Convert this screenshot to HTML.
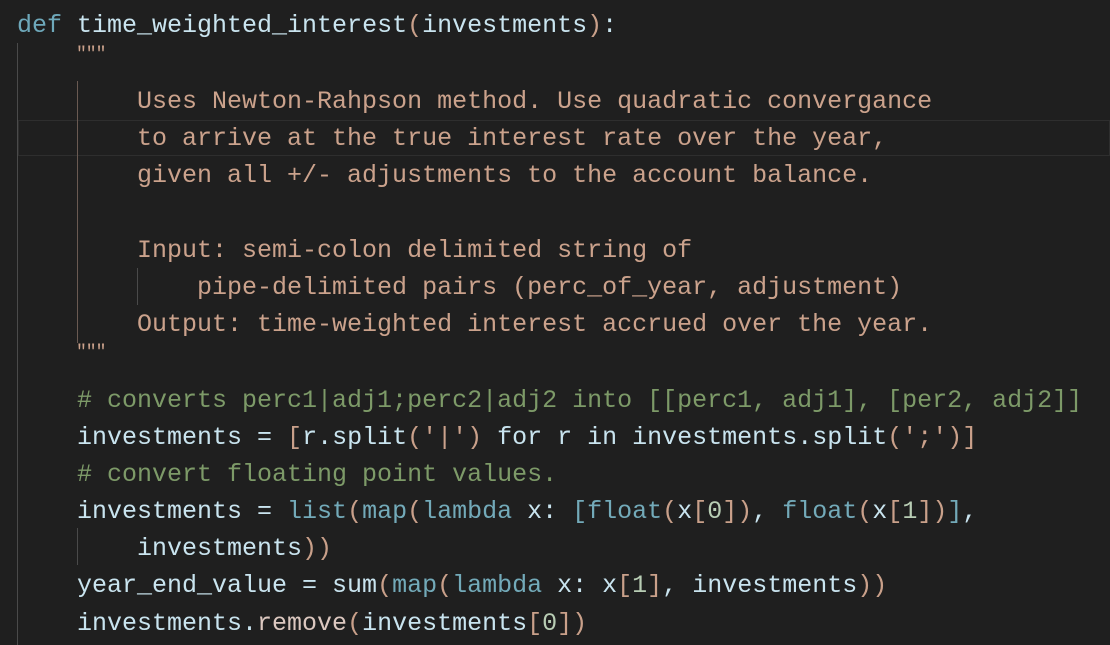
<!DOCTYPE html>
<html><head><meta charset="utf-8"><style>
html,body{margin:0;padding:0;background:#1f1f1f;width:1110px;height:645px;overflow:hidden}
.l{position:absolute;left:17px;height:37.3px;line-height:37.3px;font-family:"Liberation Mono",monospace;font-size:25px;white-space:pre;color:#c9e4ef}
.k{color:#6ea8ba}.s{color:#cba28c}.c{color:#7d9a68}.f{color:#73aab9}.p{color:#c9a08a}.n{color:#b8cdb4}
.g{position:absolute;width:1px;background:#4a4a4a}
.q{position:absolute;left:76px;font-family:"Liberation Mono",monospace;font-size:18px;color:#cba28c;letter-spacing:-1px}
</style></head><body>
<div style="position:absolute;left:18px;top:120px;width:1092px;height:36px;border:1px solid #2e2e2e;box-sizing:border-box"></div>
<div class="g" style="left:17px;top:43px;height:602px"></div>
<div class="g" style="left:77px;top:81px;height:262px;background:#6a5a52"></div>
<div class="g" style="left:137px;top:268px;height:37px"></div>
<div class="g" style="left:77px;top:528px;height:37px"></div>
<div class="l" style="top:7px"><span class="k">def</span> time_weighted_interest<span class="p">(</span>investments<span class="p">)</span>:</div>
<div class="q" style="top:45px">"""</div>
<div class="l s" style="top:83px">        Uses Newton-Rahpson method. Use quadratic convergance</div>
<div class="l s" style="top:120px">        to arrive at the true interest rate over the year,</div>
<div class="l s" style="top:157px">        given all +/- adjustments to the account balance.</div>
<div class="l s" style="top:232px">        Input: semi-colon delimited string of</div>
<div class="l s" style="top:269px">            pipe-delimited pairs (perc_of_year, adjustment)</div>
<div class="l s" style="top:306px">        Output: time-weighted interest accrued over the year.</div>
<div class="q" style="top:343px">"""</div>
<div class="l c" style="top:382px">    # converts perc1|adj1;perc2|adj2 into [[perc1, adj1], [per2, adj2]]</div>
<div class="l" style="top:419px">    investments = <span class="p">[</span>r.split<span class="p">(</span><span class="s">'|'</span><span class="p">)</span> for r in investments.split<span class="p">(</span><span class="s">';'</span><span class="p">)]</span></div>
<div class="l c" style="top:456px">    # convert floating point values.</div>
<div class="l" style="top:493px">    investments = <span class="f">list</span><span class="p">(</span><span class="f">map</span><span class="p">(</span><span class="f">lambda</span> x: <span class="f">[</span><span class="f">float</span><span class="p">(</span>x<span class="p">[</span><span class="n">0</span><span class="p">])</span>, <span class="f">float</span><span class="p">(</span>x<span class="p">[</span><span class="n">1</span><span class="p">])</span><span class="f">]</span>,</div>
<div class="l" style="top:530px">        investments<span class="p">))</span></div>
<div class="l" style="top:567px">    year_end_value = sum<span class="p">(</span><span class="f">map</span><span class="p">(</span><span class="f">lambda</span> x: x<span class="p">[</span><span class="n">1</span><span class="p">]</span>, investments<span class="p">))</span></div>
<div class="l" style="top:605px">    investments.<span style="color:#dcc8c0">remove</span><span class="p">(</span>investments<span class="p">[</span><span class="n">0</span><span class="p">])</span></div>
</body></html>
